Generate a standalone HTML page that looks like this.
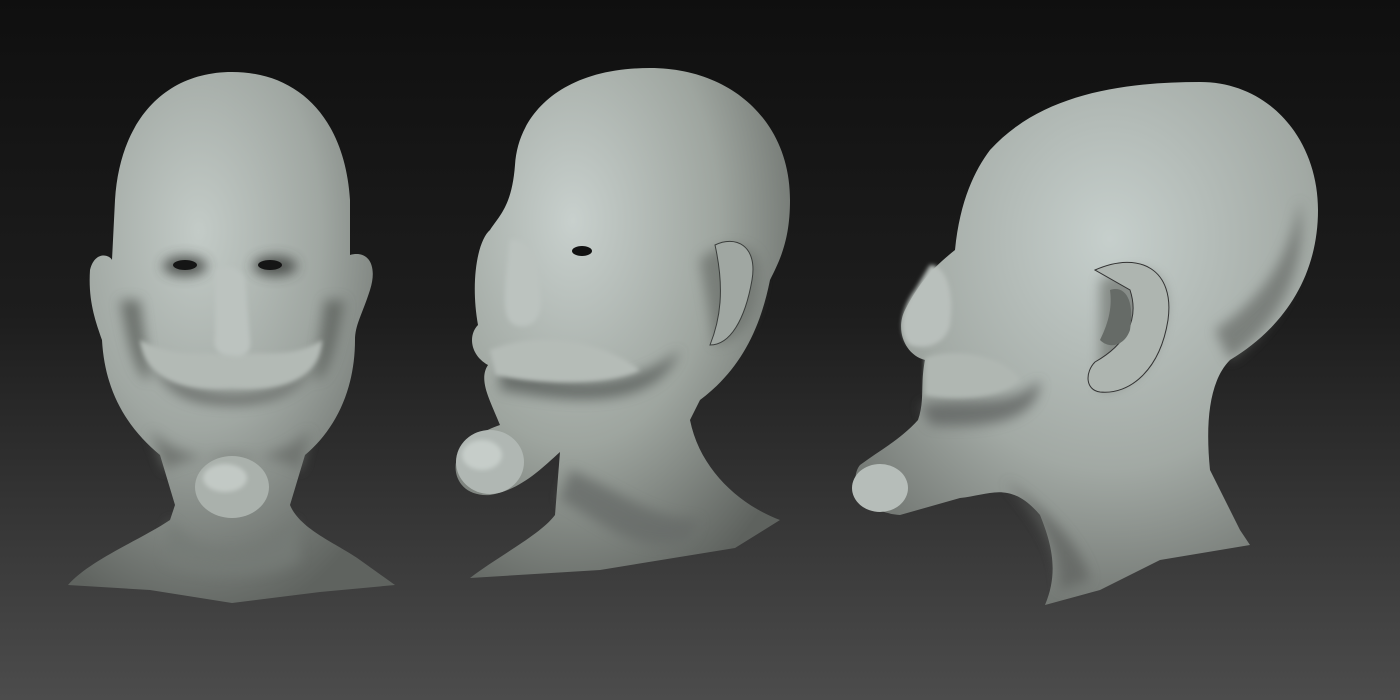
<!DOCTYPE html>
<html><head><meta charset="utf-8"><style>html,body{margin:0;padding:0;background:#111}svg{display:block}</style></head>
<body>
<svg width="1400" height="700" viewBox="0 0 1400 700" xmlns="http://www.w3.org/2000/svg">
<defs>
<linearGradient id="bg" x1="0" y1="0" x2="0" y2="1">
<stop offset="0" stop-color="#0f0f0f"/><stop offset="0.45" stop-color="#1d1d1d"/><stop offset="1" stop-color="#4c4c4c"/>
</linearGradient>
<radialGradient id="g1" cx="0.4" cy="0.3" r="0.75">
<stop offset="0" stop-color="#c3cbc7"/><stop offset="0.5" stop-color="#a0a7a2"/><stop offset="1" stop-color="#5f635f"/>
</radialGradient>
<radialGradient id="g2" cx="0.35" cy="0.3" r="0.8">
<stop offset="0" stop-color="#c8d0cd"/><stop offset="0.55" stop-color="#9ea59f"/><stop offset="1" stop-color="#5e625e"/>
</radialGradient>
<radialGradient id="g3" cx="0.55" cy="0.3" r="0.8">
<stop offset="0" stop-color="#c6cfcc"/><stop offset="0.55" stop-color="#a2a9a4"/><stop offset="1" stop-color="#646864"/>
</radialGradient>
<filter id="bl"><feGaussianBlur stdDeviation="6"/></filter>
<filter id="bl2"><feGaussianBlur stdDeviation="2"/></filter>
</defs>
<rect width="1400" height="700" fill="url(#bg)"/>

<!-- Head 1 -->
<g>
<path fill="url(#g1)" d="M232,72 C300,72 345,120 350,200 L350,255 C368,250 378,265 370,290 C362,315 355,325 355,340 C355,390 335,430 305,455 L290,505 C300,530 340,545 360,560 L395,585 L320,592 L232,603 L150,590 L68,585 C90,560 140,540 170,520 L175,505 L160,455 C130,430 105,395 102,340 C95,320 88,300 90,270 C95,250 110,255 112,260 L115,200 C120,120 165,72 232,72 Z"/>
<g filter="url(#bl)" opacity="0.8">
<path d="M150,360 C190,405 280,405 320,360 C300,395 270,405 232,405 C190,405 165,395 150,360 Z" fill="#5e625f"/>
<path d="M150,430 C190,470 270,470 310,430 L300,470 C270,450 200,450 165,470 Z" fill="#6a6e6b"/>
<ellipse cx="185" cy="266" rx="22" ry="10" fill="#3a3d3b"/>
<ellipse cx="275" cy="266" rx="22" ry="10" fill="#3a3d3b"/>
<path d="M170,520 C200,560 260,560 295,520 L300,560 C270,580 200,580 165,560 Z" fill="#767b77"/>
<path d="M120,300 C130,360 140,380 150,380 L140,300 Z M345,300 C335,360 325,380 315,380 L325,300 Z" fill="#5f635f"/>
</g>
<ellipse cx="232" cy="487" rx="37" ry="31" fill="#aab1ac"/>
<ellipse cx="225" cy="478" rx="22" ry="14" fill="#c2c9c5" filter="url(#bl2)"/>
<ellipse cx="185" cy="265" rx="12" ry="5" fill="#151515"/>
<ellipse cx="270" cy="265" rx="12" ry="5" fill="#151515"/>
<path d="M140,340 C180,360 200,350 232,355 C265,350 290,360 322,340 C320,375 290,392 232,388 C175,392 145,375 140,340 Z" fill="#b3bab5" filter="url(#bl2)"/>
<path d="M215,270 C225,265 240,265 245,280 L250,340 C252,355 240,358 232,356 C220,356 212,350 215,335 Z" fill="#bcc3bf" filter="url(#bl2)"/>
</g>

<!-- Head 2 -->
<g>
<path fill="url(#g2)" d="M650,68 C730,68 790,120 790,200 C790,240 780,260 770,280 C760,330 740,370 700,400 L690,420 C700,470 740,505 780,520 L735,548 L600,570 L470,578 C500,555 540,535 555,515 L560,452 C540,470 520,490 490,495 C462,497 450,475 458,455 C465,440 485,430 500,425 C490,400 478,380 488,365 C470,355 468,335 478,325 C470,280 478,240 490,230 C500,215 512,205 515,165 C518,115 560,68 650,68 Z"/>
<g filter="url(#bl)" opacity="0.8">
<path d="M500,360 C560,390 630,390 680,350 C660,400 600,410 500,390 Z" fill="#5c605d"/>
<path d="M560,500 C600,520 640,560 690,540 L700,520 C650,520 620,490 570,470 Z" fill="#686c69"/>
<path d="M700,260 C720,240 760,240 760,270 C760,320 740,340 715,345 Z" fill="#6f7470"/>
</g>
<ellipse cx="490" cy="462" rx="34" ry="32" fill="#b0b7b3"/>
<ellipse cx="482" cy="455" rx="20" ry="15" fill="#c6cdc9" filter="url(#bl2)"/>
<path d="M715,245 C735,235 758,245 752,280 C745,320 730,345 710,345 C720,320 725,290 715,245 Z" fill="#a0a7a2" stroke="#3a3d3b" stroke-width="1"/>
<ellipse cx="582" cy="251" rx="10" ry="5" fill="#111"/>
<path d="M510,240 C525,238 540,250 540,290 C545,320 530,330 515,325 C500,318 505,290 510,240 Z" fill="#bcc3bf" filter="url(#bl2)"/>
<path d="M490,350 C540,330 600,340 640,370 C610,385 540,385 495,375 Z" fill="#b5bcb7" filter="url(#bl2)"/>
</g>

<!-- Head 3 -->
<g>
<path fill="url(#g3)" d="M1200,82 C1270,82 1318,140 1318,210 C1318,280 1280,330 1230,360 C1210,380 1205,420 1210,470 L1240,530 L1250,545 L1160,560 L1100,590 L1045,605 C1060,570 1050,540 1040,515 C1010,480 990,495 960,498 L900,515 C860,512 848,480 860,465 C880,450 900,440 918,420 C925,400 920,385 925,360 C905,355 895,330 905,310 C918,285 930,270 955,250 C960,200 975,170 990,150 C1040,95 1120,82 1200,82 Z"/>
<g filter="url(#bl)" opacity="0.75">
<path d="M920,405 C970,395 1010,410 1040,380 C1040,420 990,430 930,425 Z" fill="#5d615e"/>
<path d="M1005,480 C1040,505 1080,540 1090,580 L1060,590 C1060,550 1040,520 1005,480 Z" fill="#606461"/>
<path d="M1100,280 C1140,260 1170,270 1165,310 C1160,360 1130,390 1100,390 Z" fill="#747975"/>
<path d="M1300,200 C1310,280 1270,330 1230,360 L1215,330 C1260,300 1290,260 1300,200 Z" fill="#6c706c"/>
</g>
<path d="M1095,270 C1140,250 1175,270 1168,320 C1160,370 1130,395 1100,392 C1085,390 1085,372 1095,362 C1125,345 1140,320 1130,290 Z" fill="#aeb5b0" stroke="#333" stroke-width="1"/>
<path d="M1110,290 C1125,285 1135,300 1130,330 C1125,345 1110,350 1100,340 C1110,320 1112,305 1110,290 Z" fill="#666b67"/>
<path d="M930,265 C945,265 955,290 950,325 C945,345 925,350 910,345 C898,335 900,310 915,290 Z" fill="#b9c0bc" filter="url(#bl2)"/>
<path d="M925,358 C960,345 1010,360 1020,380 C1000,400 950,400 925,395 Z" fill="#b0b7b2" filter="url(#bl2)"/>
<ellipse cx="880" cy="488" rx="28" ry="24" fill="#b6bdb9"/>
</g>
</svg>
</body></html>
